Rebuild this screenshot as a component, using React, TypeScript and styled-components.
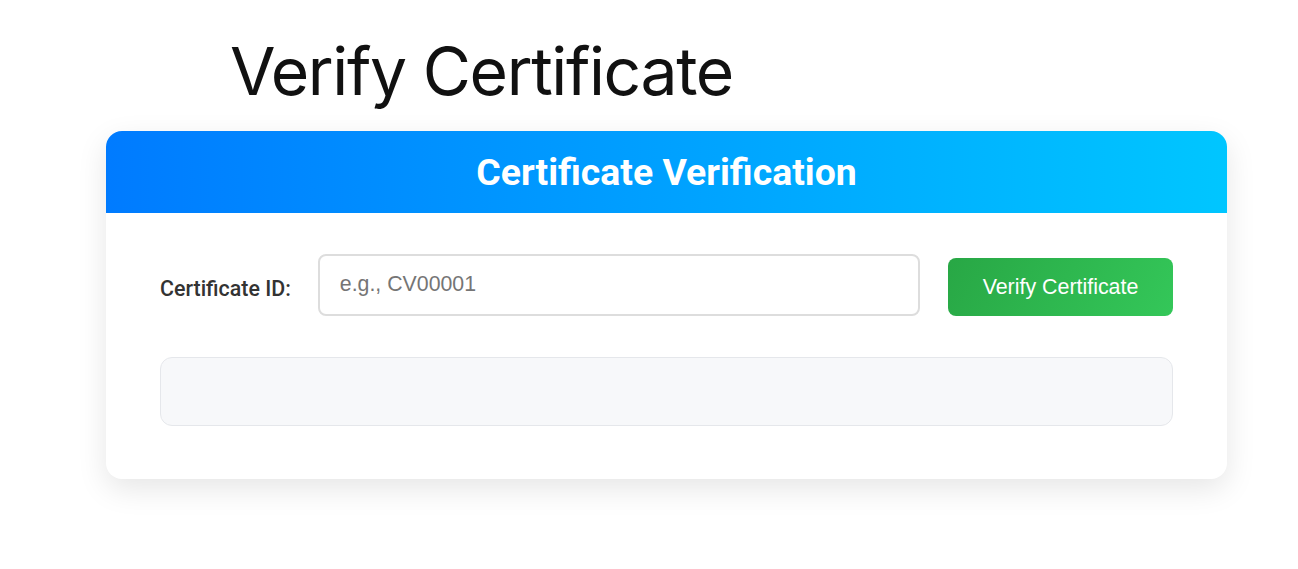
import React from "react";
import styled, { createGlobalStyle } from "styled-components";

const Global = createGlobalStyle`
  html, body { margin: 0; padding: 0; background: #ffffff; }
  body { font-family: Roboto, "Liberation Sans", sans-serif; }
  * { box-sizing: border-box; }
`;

const Page = styled.div`
  min-height: 100vh;
  display: flex;
  flex-direction: column;
  padding: 21px 71px 0 106px;
`;

const Title = styled.h1`
  margin: 0 0 10px 124px;
  font-family: Inter, "Open Sans", sans-serif;
  font-weight: 400;
  font-size: 66px;
  line-height: 100px;
  letter-spacing: -1.4px;
  color: #111;
`;

const Card = styled.section`
  width: 1121px;
  border-radius: 16px;
  background: #fff;
  box-shadow: 0 10px 30px rgba(0, 0, 0, 0.1);
  overflow: hidden;
`;

const Header = styled.header`
  height: 82px;
  display: flex;
  align-items: center;
  justify-content: center;
  background: linear-gradient(90deg, #007bff 0%, #00c6ff 100%);
`;

const HeaderTitle = styled.h2`
  margin: 0;
  font-family: Roboto, sans-serif;
  font-weight: 700;
  font-size: 37.4px;
  color: #fff;
`;

const Body = styled.div`
  padding: 41px 54px 53px;
  display: flex;
  flex-direction: column;
  gap: 41px;
`;

const Row = styled.div`
  display: flex;
  align-items: flex-end;
  gap: 27px;
`;

const Label = styled.label`
  font-family: Roboto, sans-serif;
  font-weight: 500;
  font-size: 21.4px;
  line-height: 1;
  color: #333;
  padding-bottom: 17px;
`;

const Input = styled.input`
  flex: 1;
  height: 62px;
  border: 2px solid #ddd;
  border-radius: 8px;
  padding: 0 20px 1px;
  font-family: "Liberation Sans", Arial, sans-serif;
  font-size: 21.3px;
  color: #333;
  outline: none;
  &::placeholder { color: #757575; }
`;

const Button = styled.button`
  height: 58px;
  width: 225px;
  margin-left: 1px;
  border: none;
  border-radius: 8px;
  background: linear-gradient(120deg, #28a745 0%, #34c759 100%);
  color: #fff;
  font-family: "Liberation Sans", Arial, sans-serif;
  font-size: 21.4px;
  cursor: pointer;
`;

const Result = styled.div`
  height: 69px;
  border: 1px solid #e5e7eb;
  border-radius: 12px;
  background: #f7f8fa;
`;

export default function App() {
  return (
    <>
      <Global />
      <Page>
        <Title>Verify Certificate</Title>
        <Card>
          <Header>
            <HeaderTitle>Certificate Verification</HeaderTitle>
          </Header>
          <Body>
            <Row>
              <Label htmlFor="cid">Certificate ID:</Label>
              <Input id="cid" placeholder="e.g., CV00001" />
              <Button>Verify Certificate</Button>
            </Row>
            <Result />
          </Body>
        </Card>
      </Page>
    </>
  );
}
